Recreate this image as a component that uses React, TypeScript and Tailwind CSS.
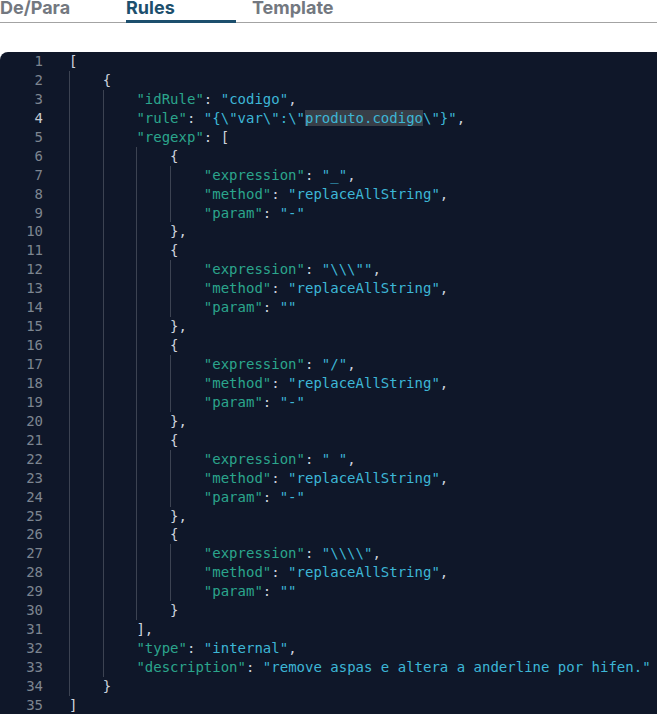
import React from 'react';

const code = `[
    {
        "idRule": "codigo",
        "rule": "{\\"var\\":\\"produto.codigo\\"}",
        "regexp": [
            {
                "expression": "_",
                "method": "replaceAllString",
                "param": "-"
            },
            {
                "expression": "\\\\\\"",
                "method": "replaceAllString",
                "param": ""
            },
            {
                "expression": "/",
                "method": "replaceAllString",
                "param": "-"
            },
            {
                "expression": " ",
                "method": "replaceAllString",
                "param": "-"
            },
            {
                "expression": "\\\\\\\\",
                "method": "replaceAllString",
                "param": ""
            }
        ],
        "type": "internal",
        "description": "remove aspas e altera a anderline por hifen."
    }
]`;

const lines = code.split('\n');

type Token = { text: string; kind: 'p' | 'k' | 's' };

const tokenize = (src: string): Token[] => {
  const out: Token[] = [];
  const re = /"(?:[^"\\]|\\.)*"/g;
  let last = 0;
  let m: RegExpExecArray | null;
  while ((m = re.exec(src))) {
    if (m.index > last) out.push({ text: src.slice(last, m.index), kind: 'p' });
    const rest = src.slice(m.index + m[0].length);
    out.push({ text: m[0], kind: /^\s*:/.test(rest) ? 'k' : 's' });
    last = m.index + m[0].length;
  }
  if (last < src.length) out.push({ text: src.slice(last), kind: 'p' });
  return out;
};

const colors = {
  p: 'text-[#cdd3de]',
  k: 'text-[#2ba58c]',
  s: 'text-[#3db6d6]'
};

const Tabs = () => (
  <div className="flex gap-4 h-[23px] border-b border-[#a3a3a3] font-['Inter',sans-serif] font-bold text-[18px]">
    {['De/Para', 'Rules', 'Template'].map((t) => (
      <div
        key={t}
        className={`w-[110px] h-[23px] -mb-px ${
          t === 'Rules' ? 'border-b-[3px] border-[#1c4f6d] text-[#1c4f6d]' : 'text-[#737880]'
        }`}
      >
        <span className="block leading-[18px] -mt-px">{t}</span>
      </div>
    ))}
  </div>
);

const CodeLine = ({ text, index }: { text: string; index: number }) => {
  const indent = text.match(/^ */)![0].length;
  const levels = Math.floor(indent / 4);
  const body = text.slice(levels * 4);

  let content: React.ReactNode;
  if (index === 3) {
    // active line with selection highlight
    content = (
      <>
        <span className={colors.k}>"rule"</span>
        <span className={colors.p}>: </span>
        <span className={colors.s}>{'"{\\"var\\":\\"'}</span>
        <span className={`${colors.s} bg-[#383e47]`}>produto.codigo</span>
        <span className={colors.s}>{'\\"}"'}</span>
        <span className={colors.p}>,</span>
      </>
    );
  } else {
    content = tokenize(body).map((tk, i) => (
      <span key={i} className={colors[tk.kind]}>
        {tk.text}
      </span>
    ));
  }

  return (
    <div className="flex h-[18.94px] leading-[18.94px]">
      <div
        className={`w-[43px] shrink-0 text-right ${
          index === 3 ? 'text-[#c6cbd3]' : 'text-[#7d8590]'
        }`}
      >
        {index + 1}
      </div>
      <div className="pl-[26px] whitespace-pre">
        {Array.from({ length: levels }).map((_, i) => (
          <span
            key={i}
            className="inline-block align-top w-[4ch] h-[18.94px] border-l border-[#3c4352]"
          />
        ))}
        {content}
      </div>
    </div>
  );
};

const App = () => {
  return (
    <div className="w-[657px] h-[714px] overflow-hidden bg-white">
      <Tabs />
      <div className="mt-[29px] bg-[#0f1729] rounded-tl-lg h-[700px] font-['DejaVu_Sans_Mono',monospace] text-[14px]">
        {lines.map((l, i) => (
          <CodeLine key={i} text={l} index={i} />
        ))}
      </div>
    </div>
  );
};

export default App;
